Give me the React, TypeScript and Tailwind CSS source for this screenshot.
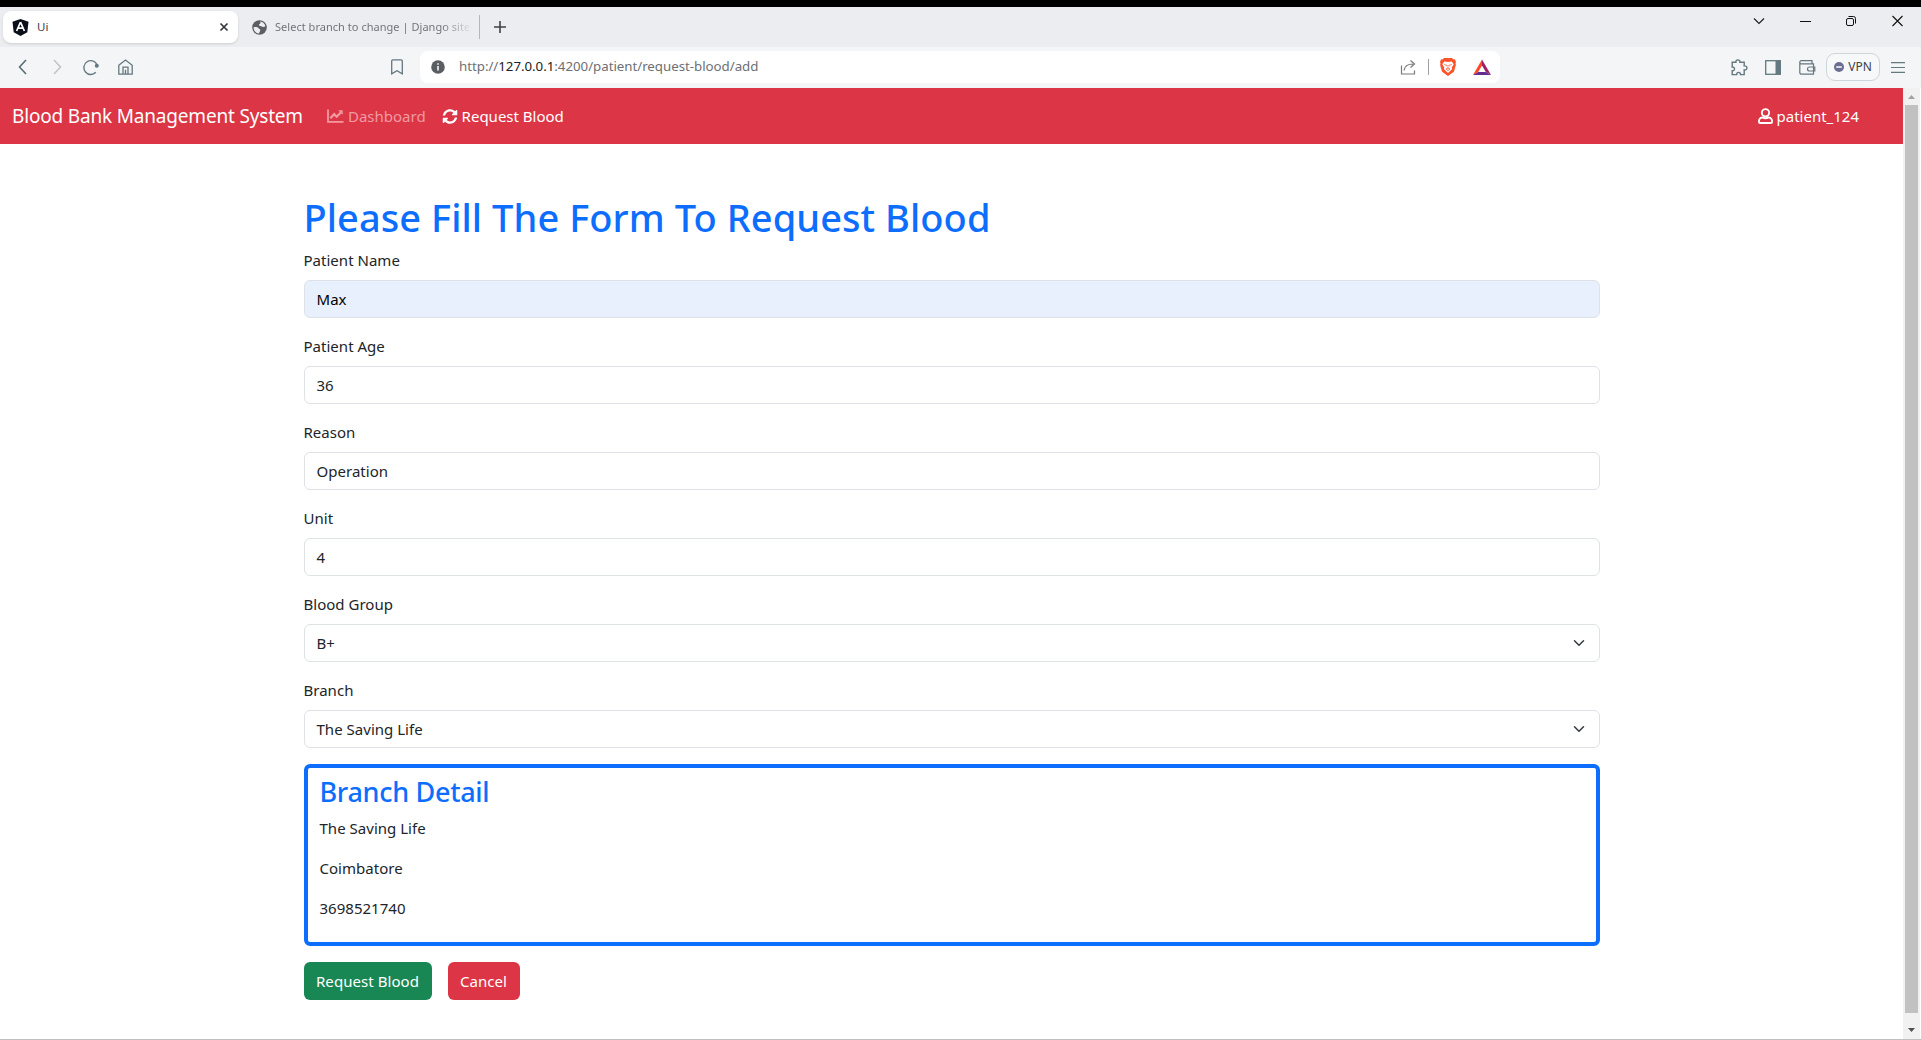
import type { ReactNode } from "react";
import { FaSyncAlt } from "react-icons/fa";

function Tab({ active, icon, title }: { active?: boolean; icon: ReactNode; title: string }) {
  return (
    <div
      className={
        active
          ? "flex h-8 w-[235px] items-center rounded-lg bg-white pr-[9px] pl-[9px] shadow-sm"
          : "flex h-8 w-[233px] items-center pl-[6px]"
      }
    >
      {icon}
      <span
        className={
          active
            ? "ml-2 flex-1 text-[11.5px] text-[#3d4147]"
            : "ml-2 w-[195px] overflow-hidden bg-linear-to-r from-[#6b6e73] from-85% to-[#e2e3e6] bg-clip-text text-[11px] tracking-[0.03px] whitespace-nowrap text-transparent"
        }
      >
        {title}
      </span>
      {active && (
        <svg width="10" height="10" viewBox="0 0 10 10" fill="none" stroke="#33363b" strokeWidth="1.7">
          <path d="M1.5 1.5l7 7M8.5 1.5l-7 7" />
        </svg>
      )}
    </div>
  );
}

function TabStrip() {
  return (
    <div className="flex h-10 items-start bg-[#ecedf1] pt-1 pl-[3px]">
      <Tab
        active
        title="Ui"
        icon={
          <svg width="17" height="17" viewBox="0 0 16 17">
            <path d="M8 0l8 2.8-1.2 10.4L8 17l-6.8-3.8L0 2.800z" fill="#0b0f19" />
            <path d="M8 3.200l-3.900 8.800M8 3.200l3.900 8.800M5.600 9.200h4.800" stroke="#fff" strokeWidth="1.700" fill="none" />
          </svg>
        }
      />
      <div className="ml-2 flex items-center">
        <Tab
          title="Select branch to change | Django site"
          icon={
            <svg width="15" height="15" viewBox="0 0 15 15">
              <circle cx="7.500" cy="7.500" r="7.300" fill="#5b5e63" />
              <path d="M1.600 7.200C3.500 6.800 6 7 6.600 8.300c.5 1 1.800.6 1.700 2-.1 1.300-1 1.500-1.100 3.100C4 13.300 1.500 10.800 1.600 7.200z" fill="#ecedf1" />
              <path d="M8.200 1.600c2.600.3 4.700 2.200 5.200 4.700-1.200.9-2.700 1-3.600.3-.8-.7-2.600-.3-2.800-1.500-.2-1.100 1.500-1 1.500-2z" fill="#ecedf1" />
            </svg>
          }
        />
        <div className="h-6 w-px bg-[#b4b6ba]" />
        <svg className="ml-[14px]" width="12" height="12" viewBox="0 0 12 12" stroke="#3f4246" strokeWidth="1.600">
          <path d="M6 0v12M0 6h12" />
        </svg>
      </div>
      <div className="mt-1 mr-[18px] ml-auto flex items-center">
        <svg width="12" height="12" viewBox="0 0 12 12" fill="none" stroke="#1c1c1c" strokeWidth="1.100">
          <path d="M1 3.500l5 5 5-5" />
        </svg>
        <svg className="ml-[35px]" width="11" height="12" viewBox="0 0 11 12" stroke="#111" strokeWidth="1">
          <path d="M0 6.500h11" />
        </svg>
        <svg className="ml-[35px]" width="11" height="12" viewBox="0 0 11 12" fill="none" stroke="#111">
          <rect x=".5" y="3.500" width="7" height="7" rx="1.500" />
          <path d="M2.500 1.500h5a2 2 0 012 2v5" />
        </svg>
        <svg className="ml-[35px]" width="11" height="12" viewBox="0 0 11 12" stroke="#111" strokeWidth="1.100">
          <path d="M.5 1l10 10M10.500 1l-10 10" />
        </svg>
      </div>
    </div>
  );
}

function AddressBar() {
  return (
    <div className="flex h-8 w-[1080px] items-center rounded-lg bg-white pl-[11px]">
      <svg width="14" height="14" viewBox="0 0 14 14">
        <circle cx="7" cy="7" r="6.800" fill="#5a5d62" />
        <path d="M7 3.200v1.500M7 6v4.600" stroke="#fff" strokeWidth="1.500" />
      </svg>
      <p className="ml-[14px] text-[13.3px] tracking-[-0.03px] whitespace-nowrap text-[#6c7075]">
        http://<span className="text-[#202124]">127.0.0.1</span>:4200/patient/request-blood/add
      </p>
      <svg className="ml-auto" width="17" height="17" viewBox="0 0 17 17" fill="none" stroke="#76797e" strokeWidth="1.200">
        <path d="M1.500 6.500V15h13v-3.500" />
        <path d="M4 11.500C4.500 7.500 7.500 5 13 5M10.500 1.500L14.500 5l-4 3.500" />
      </svg>
      <div className="mx-[11px] h-4 w-px bg-[#9da0a5]" />
      <svg width="16" height="18" viewBox="0 0 16 18">
        <path d="M4 0h8l1.500 1.400 1.300-.2L16 3.800l-.5 1.600.4 1.600-2 6.800L8 18l-5.900-4.200-2-6.800.4-1.600L0 3.800l1.200-2.600 1.300.2z" fill="#fb542b" />
        <path d="M4.300 3.500L8 4l3.700-.5 2 2.800-2 3.200.5 1.600L8 14.900l-4.200-3.800.5-1.600-2-3.200z" fill="#fff" />
        <path d="M4.300 6.500l2.500.8-.5 1M11.700 6.500l-2.500.8.500 1M6 11l2-1 2 1-2 1.600z" stroke="#fb542b" strokeWidth=".8" fill="none" />
        <path d="M8 7v3" stroke="#fb542b" strokeWidth=".6" />
      </svg>
      <svg className="mr-[9px] ml-[17px]" width="18" height="17" viewBox="0 0 18 17">
        <path d="M9 .500L0 16l5.200-3L9 6.500z" fill="#ff4724" />
        <path d="M9 .500L18 16l-5.200-3L9 6.500z" fill="#9e1f63" />
        <path d="M0 16h18l-5.200-3H5.200z" fill="#662d91" />
      </svg>
    </div>
  );
}

function Toolbar() {
  return (
    <div className="flex h-[41px] items-center bg-[#f3f5f7] pb-px text-[#64787f]">
      <div className="flex items-center pl-[18px]">
        <svg width="9" height="16" viewBox="0 0 9 16" fill="none" stroke="#566970" strokeWidth="1.500">
          <path d="M8 1L1.500 8 8 15" />
        </svg>
        <svg className="ml-[26px]" width="9" height="16" viewBox="0 0 9 16" fill="none" stroke="#bcc5c9" strokeWidth="1.500">
          <path d="M1 1l6.500 7L1 15" />
        </svg>
        <svg className="ml-[21px]" width="17" height="17" viewBox="0 0 17 17" fill="none" stroke="currentColor" strokeWidth="1.400">
          <path d="M12.800 13.300A6.900 6.900 0 1 1 14 5.500" />
          <circle cx="13.800" cy="6.800" r="2" fill="currentColor" stroke="none" />
        </svg>
        <svg className="ml-[18px]" width="15" height="16" viewBox="0 0 15 16" fill="none" stroke="currentColor" strokeWidth="1.300">
          <path d="M.800 6.200L7.500 1l6.700 5.200v8.900H.800z" />
          <path d="M5 15V8.200h5V15M7.500 15v-4.300" />
        </svg>
      </div>
      <svg className="ml-[258px]" width="12" height="16" viewBox="0 0 12 16" fill="none" stroke="currentColor" strokeWidth="1.300">
        <path d="M.700 14.800V2A1.200 1.200 0 011.900.800h8.200A1.200 1.200 0 0111.300 2v12.800L6 11.800z" />
      </svg>
      <div className="ml-[17px]">
        <AddressBar />
      </div>
      <div className="mr-4 ml-auto flex items-center">
        <svg width="17" height="17" viewBox="0 0 17 17" fill="none" stroke="currentColor" strokeWidth="1.400">
          <path d="M1.200 3.300h3.700C4.600 1.700 5.700.900 6.900.900s2.300.8 2 2.400h4.300v3.600c1.700-.3 2.700.7 2.700 2s-1 2.300-2.700 2v4.700H9.500c.2-1.500-.8-2.200-1.900-2.200s-2.100.7-1.900 2.200H1.200v-3.900c1.500.2 2.300-.7 2.300-1.800S2.700 7.900 1.200 8.100z" />
        </svg>
        <svg className="ml-[17px]" width="16" height="15" viewBox="0 0 16 15" fill="none" stroke="currentColor" strokeWidth="1.300">
          <rect x=".7" y=".7" width="14.600" height="13.600" />
          <path d="M10.500 .5H15.500V14.500H10.500z" fill="currentColor" stroke="none" />
        </svg>
        <svg className="ml-[18px]" width="17" height="15" viewBox="0 0 17 15" fill="none" stroke="currentColor" strokeWidth="1.200">
          <path d="M.800 2.200A1.500 1.500 0 012.300.700H13v2.500M.800 2.200v10.300a1.700 1.700 0 001.700 1.700h12V3.800H2.300A1.500 1.500 0 01.800 2.300z" />
          <path d="M15.800 7H10.500a2 2 0 000 4h5.300z" />
        </svg>
        <div className="ml-[10px] flex h-7 w-[54px] items-center justify-center rounded-[9px] border border-[#ccd6db] bg-[#f7f8fa]">
          <svg width="10" height="10" viewBox="0 0 10 10">
            <circle cx="5" cy="5" r="5" fill="#6b6d93" />
            <path d="M2.200 5h5.600" stroke="#fff" strokeWidth="1.500" />
          </svg>
          <span className="ml-1 text-[12px] text-[#3f4246]">VPN</span>
        </div>
        <svg className="ml-[11px]" width="14" height="11" viewBox="0 0 14 11" stroke="currentColor" strokeWidth="1.200">
          <path d="M0 .700h14M0 5.500h14M0 10.300h14" />
        </svg>
      </div>
    </div>
  );
}

function Navbar() {
  return (
    <nav className="flex h-14 shrink-0 items-center bg-[#dc3545] pr-11 pl-3 text-[15px] text-white">
      <span className="pt-px text-[19px] tracking-[-0.18px]">Blood Bank Management System</span>
      <span className="ml-6 flex items-center gap-1 text-[#f19aa2]">
        <svg width="17" height="14" viewBox="0 0 17 14" fill="none" stroke="currentColor">
          <path d="M1 .5v12.300h15.500" strokeWidth="1.800" />
          <path d="M3.300 9.300l3.900-4.100 2.500 2.500 4.100-4.300" strokeWidth="2.200" />
          <path d="M11.200 1.200h4.500v4.500z" fill="currentColor" stroke="none" />
        </svg>
        Dashboard
      </span>
      <span className="ml-4 flex items-center gap-1">
        <FaSyncAlt className="h-[15px] w-4" />
        Request Blood
      </span>
      <span className="ml-auto flex items-center gap-1">
        <svg width="15" height="16" viewBox="0 0 16 17" fill="none" stroke="#fff" strokeWidth="2">
          <circle cx="8" cy="5" r="3.900" />
          <path d="M4.600 10C2.300 10.400 1 12 1 14.500c0 .9.300 1.400 1.200 1.400h11.600c.9 0 1.200-.5 1.200-1.400 0-2.500-1.300-4.100-3.600-4.500-1.900 1-4.900 1-6.800 0z" />
        </svg>
        patient_124
      </span>
    </nav>
  );
}

const fields = [
  { label: "Patient Name", value: "Max", filled: true },
  { label: "Patient Age", value: "36" },
  { label: "Reason", value: "Operation" },
  { label: "Unit", value: "4" },
  { label: "Blood Group", value: "B+", select: true },
  { label: "Branch", value: "The Saving Life", select: true },
];

function Field({ label, value, filled, select }: { label: string; value: string; filled?: boolean; select?: boolean }) {
  return (
    <div className="mb-4">
      <div className="mb-2 h-6 leading-6">{label}</div>
      <div
        className={
          filled
            ? "flex h-[38px] items-center justify-between rounded-md border border-[#dee2e6] bg-[#e8f0fe] px-3 text-black"
            : "flex h-[38px] items-center justify-between rounded-md border border-[#dee2e6] bg-white px-3"
        }
      >
        <span>{value}</span>
        {select && (
          <svg width="16" height="12" viewBox="0 0 16 16" fill="none" stroke="#343a40" strokeWidth="2" strokeLinecap="round" strokeLinejoin="round">
            <path d="m2 5 6 6 6-6" />
          </svg>
        )}
      </div>
    </div>
  );
}

function RequestForm() {
  return (
    <main className="mx-auto mt-12 w-[1296px] text-[15px] tracking-[0.02px] text-[#212529]">
      <h1 className="mb-[7px] pt-px text-[38px] leading-[48px] font-medium tracking-[0.06px] text-[#0d6efd]">
        Please Fill The Form To Request Blood
      </h1>
      {fields.map((f) => (
        <Field key={f.label} {...f} />
      ))}
      <section className="mb-4 h-[182px] rounded-md border-4 border-[#0d6efd] px-3 py-[7px] leading-6">
        <h3 className="mb-[7px] text-[27px] leading-[34px] font-medium tracking-[-0.3px] text-[#0d6efd]">Branch Detail</h3>
        <p className="mb-4">The Saving Life</p>
        <p className="mb-4">Coimbatore</p>
        <p>3698521740</p>
      </section>
      <div className="flex gap-4 text-white">
        <button className="h-[38px] w-32 rounded-md bg-[#198754] tracking-[0.06px]">Request Blood</button>
        <button className="h-[38px] w-[72px] rounded-md bg-[#dc3545]">Cancel</button>
      </div>
    </main>
  );
}

function Scrollbar() {
  return (
    <div className="flex w-[17px] flex-col items-center bg-[#f1f1f1]">
      <svg width="17" height="17" viewBox="0 0 17 17">
        <path d="M5 11h7L8.500 7z" fill="#a3a3a3" />
      </svg>
      <div className="w-[13px] flex-1 bg-[#c1c1c1]" />
      <svg width="17" height="26" viewBox="0 0 17 26">
        <path d="M5 15h7l-3.500 4z" fill="#505050" />
      </svg>
    </div>
  );
}

export default function App() {
  return (
    <div className="flex h-[1040px] w-[1921px] flex-col overflow-hidden bg-white font-['Noto_Sans',sans-serif]">
      <div className="h-[7px] bg-black" />
      <TabStrip />
      <Toolbar />
      <div className="flex min-h-0 flex-1 border-b border-[#bfbfbf]">
        <div className="flex w-[1903px] flex-col">
          <Navbar />
          <RequestForm />
        </div>
        <Scrollbar />
      </div>
    </div>
  );
}
